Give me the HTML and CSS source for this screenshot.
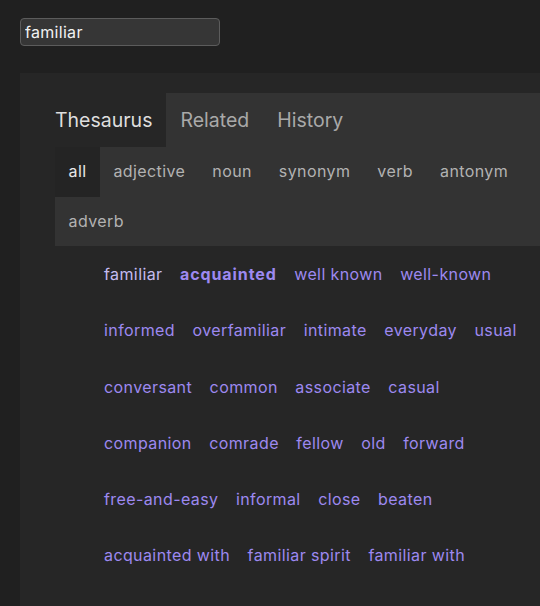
FILE: index.html
```html
<!DOCTYPE html>
<html>
<head>
<meta charset="utf-8">
<link rel="stylesheet" href="styles.css">
</head>
<body>
<div class="page">
  <input class="search" type="text" value="familiar">
  <div class="panel">
    <div class="tabs">
      <div class="tab active">Thesaurus</div>
      <div class="tab">Related</div>
      <div class="tab">History</div>
    </div>
    <div class="pos">
      <div class="pos-item active">all</div>
      <div class="pos-item">adjective</div>
      <div class="pos-item">noun</div>
      <div class="pos-item">synonym</div>
      <div class="pos-item">verb</div>
      <div class="pos-item">antonym</div>
      <div class="pos-item">adverb</div>
    </div>
    <div class="words">
      <span class="word current">familiar</span>
      <span class="word strong">acquainted</span>
      <span class="word">well known</span>
      <span class="word">well-known</span>
      <span class="word">informed</span>
      <span class="word">overfamiliar</span>
      <span class="word">intimate</span>
      <span class="word">everyday</span>
      <span class="word">usual</span>
      <span class="word">conversant</span>
      <span class="word">common</span>
      <span class="word">associate</span>
      <span class="word">casual</span>
      <span class="word">companion</span>
      <span class="word">comrade</span>
      <span class="word">fellow</span>
      <span class="word">old</span>
      <span class="word">forward</span>
      <span class="word">free-and-easy</span>
      <span class="word">informal</span>
      <span class="word">close</span>
      <span class="word">beaten</span>
      <span class="word">acquainted with</span>
      <span class="word">familiar spirit</span>
      <span class="word">familiar with</span>
    </div>
  </div>
</div>
</body>
</html>
```

FILE: styles.css
```css
html, body {
  margin: 0;
  padding: 0;
  background: #202020;
  overflow: hidden;
  height: 100%;
}

body {
  font-family: Inter, "Noto Sans", sans-serif;
}

.page {
  padding: 18px 0 0 20px;
  width: 580px;
}

.search {
  display: block;
  box-sizing: border-box;
  width: 200px;
  height: 28px;
  margin: 0;
  padding: 0 4px;
  background: #363636;
  border: 1px solid #5c5c5c;
  border-radius: 4px;
  color: #f2f2f2;
  font-family: Inter, "Noto Sans", sans-serif;
  font-size: 16px;
  letter-spacing: 0.3px;
  outline: none;
}

.panel {
  margin-top: 27px;
  background: #262626;
  padding: 20px 0 0 21px;
  height: 560px;
}

.tabs {
  display: flex;
  background: #333333;
}

.tab {
  padding: 0 14px;
  height: 54px;
  line-height: 54px;
  font-size: 19.5px;
  color: #a9a9a9;
}

.tab.active {
  background: #262626;
  color: #dedede;
}

.pos {
  display: flex;
  flex-wrap: wrap;
  margin-left: 14px;
  width: 505px;
  background: #333333;
}

.pos-item {
  padding: 0 13.5px;
  height: 49.5px;
  line-height: 49.5px;
  font-size: 16px;
  letter-spacing: 0.4px;
  color: #b2b2b2;
}

.pos-item.active {
  background: #242424;
  color: #e8e8e8;
}

.words {
  display: flex;
  flex-wrap: wrap;
  column-gap: 17.5px;
  margin-left: 63px;
  width: 430px;
}

.word {
  font-size: 16px;
  line-height: 56.3px;
  letter-spacing: 0.4px;
  color: #9d89f0;
  white-space: nowrap;
}

.word.current {
  color: #c4bbf0;
}

.word.strong {
  font-weight: 700;
  letter-spacing: 0.9px;
}
```
